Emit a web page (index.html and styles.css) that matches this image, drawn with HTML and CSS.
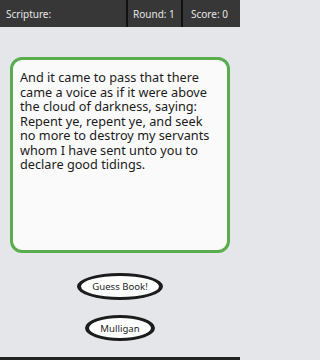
FILE: index.html
```html
<!DOCTYPE html>
<html>
<head>
<meta charset="utf-8">
<link rel="stylesheet" href="styles.css">
</head>
<body>
<div class="header">
  <div class="cell cell-scripture">Scripture:</div>
  <div class="cell cell-round">Round: 1</div>
  <div class="cell cell-score">Score: 0</div>
</div>
<div class="main">
  <div class="verse-box">
    <p class="verse">And it came to pass that there came a voice as if it were above the cloud of darkness, saying: Repent ye, repent ye, and seek no more to destroy my servants whom I have sent unto you to declare good tidings.</p>
  </div>
  <div class="buttons">
    <div class="btn btn-guess">Guess Book!</div>
    <div class="btn btn-mulligan">Mulligan</div>
  </div>
</div>
<div class="footer"></div>
</body>
</html>
```

FILE: styles.css
```css
html, body {
  margin: 0;
  padding: 0;
}
body {
  width: 240px;
  height: 360px;
  background: #e4e6ea;
  font-family: "Noto Sans", "Open Sans", sans-serif;
  display: flex;
  flex-direction: column;
  overflow: hidden;
}
.header {
  display: flex;
  height: 27px;
  background: #373737;
  color: #e6e6e6;
  font-size: 10px;
  flex: none;
  white-space: nowrap;
}
.cell {
  display: flex;
  align-items: center;
  box-sizing: border-box;
}
.cell-scripture {
  flex: 1;
  padding-left: 6px;
}
.cell-round {
  width: 55px;
  flex: none;
  border-left: 2px solid #111;
  padding-left: 5px;
}
.cell-score {
  width: 59px;
  flex: none;
  border-left: 2px solid #111;
  padding-left: 8px;
}
.main {
  flex: 1;
  display: flex;
  flex-direction: column;
  padding-top: 30px;
}
.verse-box {
  margin: 0 10px;
  height: 196px;
  box-sizing: border-box;
  border: 3px solid #5aad4d;
  border-radius: 12px;
  background: #fafafa;
  padding: 10px 10px 0 7px;
}
.verse {
  margin: 0;
  font-size: 12.7px;
  line-height: 14.5px;
  color: #1a1a1a;
}
.buttons {
  display: flex;
  flex-direction: column;
  align-items: center;
  margin-top: 20px;
  gap: 15px;
}
.btn {
  display: flex;
  align-items: center;
  justify-content: center;
  box-sizing: border-box;
  background: #fff;
  border-style: solid;
  border-color: #1c1c1c;
  border-width: 3px 4px;
  border-radius: 50%;
  font-size: 9.6px;
  color: #1e1e1e;
}
.btn-guess {
  width: 86px;
  height: 27px;
}
.btn-mulligan {
  width: 70px;
  height: 26px;
}
.footer {
  height: 3px;
  background: #222;
  flex: none;
}
```
